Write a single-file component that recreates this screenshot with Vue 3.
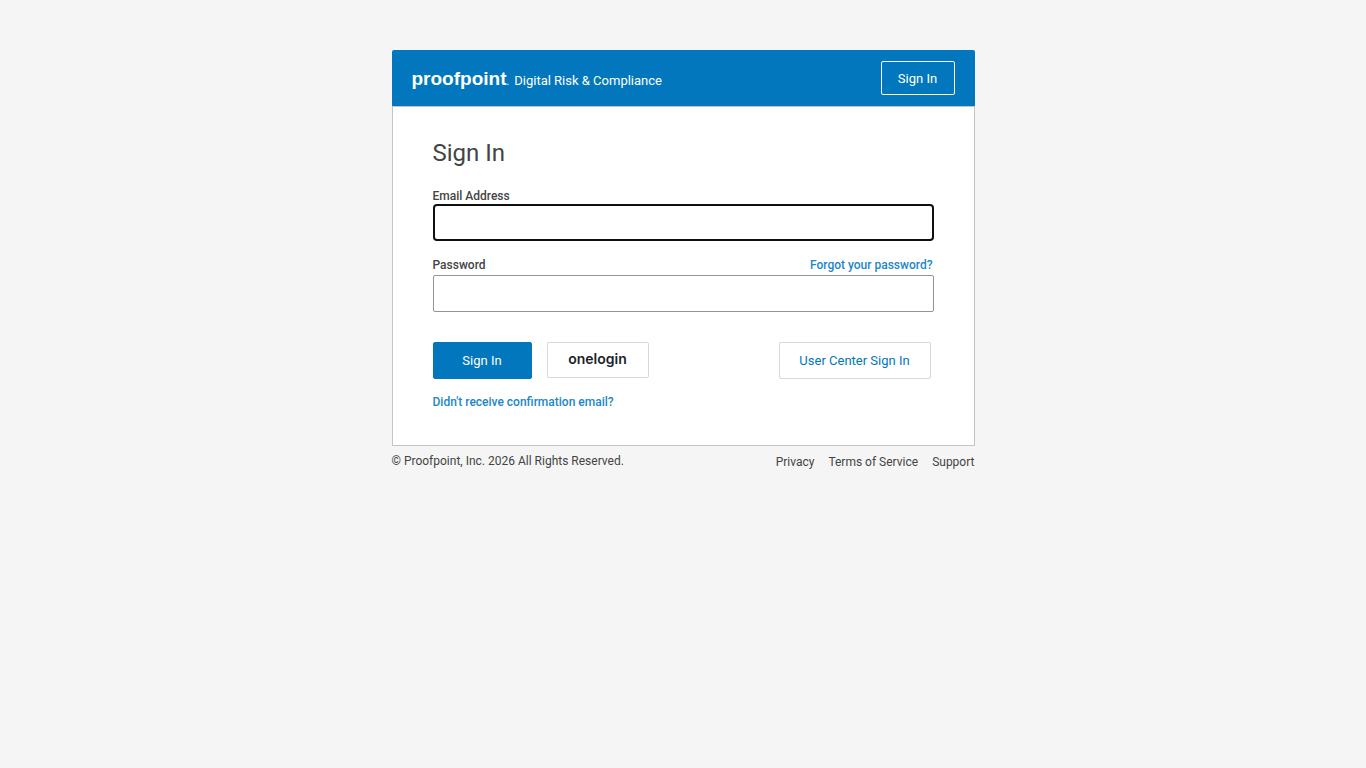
<script setup>
import { ref, onMounted } from 'vue'

const email = ref('')
const password = ref('')
const emailField = ref(null)
const links = ['Privacy', 'Terms of Service', 'Support']

onMounted(() => emailField.value.focus())
</script>

<template>
  <div class="page">
    <header class="header">
      <div class="brand">
        <span class="logo">proofpoint<span class="mark">.</span></span>
        <span class="product">Digital Risk &amp; Compliance</span>
      </div>
      <button type="button" class="btn header-btn">Sign In</button>
    </header>

    <main class="card">
      <h1>Sign In</h1>
      <form @submit.prevent>
        <div class="label-row">
          <label for="email">Email Address</label>
        </div>
        <input id="email" ref="emailField" v-model="email" type="email" class="field" />

        <div class="label-row second">
          <label for="password">Password</label>
          <a href="#" class="link">Forgot your password?</a>
        </div>
        <input id="password" v-model="password" type="password" class="field" />

        <div class="actions">
          <button type="submit" class="btn primary">Sign In</button>
          <button type="button" class="btn onelogin">onelogin</button>
          <button type="button" class="btn user-center">User Center Sign In</button>
        </div>
      </form>
      <a href="#" class="link">Didn't receive confirmation email?</a>
    </main>

    <footer class="footer">
      <span>© Proofpoint, Inc. 2026 All Rights Reserved.</span>
      <nav>
        <a v-for="item in links" :key="item" href="#">{{ item }}</a>
      </nav>
    </footer>
  </div>
</template>

<style>
body {
  background: #f5f5f5;
}
</style>

<style scoped>
.page {
  max-width: 583px;
  margin: 50px auto 0;
  font-family: Roboto, sans-serif;
  font-size: 12px;
  color: #444;
}
.page * {
  box-sizing: border-box;
}
.header {
  display: flex;
  justify-content: space-between;
  align-items: center;
  height: 56px;
  padding: 0 20px;
  background: #0277bd;
  border-radius: 2px 2px 0 0;
  color: #fff;
}
.brand {
  display: flex;
  align-items: baseline;
  gap: 5px;
  padding-top: 4px;
}
.logo {
  font: bold 19px/24px "Liberation Sans", Arial, sans-serif;
}
.mark {
  font-size: 10px;
  font-weight: normal;
}
.product {
  font-size: 13px;
}
.btn {
  font: 400 13px/16px Roboto, sans-serif;
  height: 37px;
  padding: 0;
  border: 1px solid #d8d8d8;
  border-radius: 2px;
  background: #fff;
  cursor: pointer;
}
.header-btn {
  width: 74px;
  height: 34px;
  padding-top: 2px;
  border-color: #fff;
  background: transparent;
  color: #fff;
}
.card {
  padding: 30px 40px 35px;
  background: #fff;
  border: 1px solid #c4c4c4;
}
h1 {
  margin: 0 0 19px;
  font-size: 24px;
  line-height: 32px;
  font-weight: 400;
}
.label-row {
  display: flex;
  justify-content: space-between;
  padding-right: 1px;
  line-height: 16px;
  font-weight: 500;
}
.label-row.second {
  margin-top: 16px;
  margin-bottom: 2px;
}
.field {
  display: block;
  width: 100%;
  height: 37px;
  padding: 0 10px;
  border: 1px solid #949494;
  border-radius: 2px;
  background: #fff;
  font: 13px Roboto, sans-serif;
  color: #444;
}
.field:focus {
  border: 2px solid #101010;
  border-radius: 4px;
  outline: none;
}
.actions {
  display: flex;
  align-items: flex-start;
  margin: 30px 3px 15px 0;
}
.primary {
  width: 99px;
  border-color: #0277bd;
  background: #0277bd;
  color: #fff;
}
.onelogin {
  width: 102px;
  height: 36px;
  margin-left: 15px;
  padding-bottom: 3px;
  font: 600 14px/18px Inter, sans-serif;
  color: #1c1f2a;
}
.user-center {
  width: 152px;
  margin-left: auto;
  color: #0277bd;
}
.link {
  font-weight: 500;
  line-height: 16px;
  color: #1b87c9;
  text-decoration: none;
}
.footer {
  display: flex;
  justify-content: space-between;
  align-items: flex-start;
  margin-top: 7px;
  line-height: 16px;
}
.footer nav {
  display: flex;
  gap: 14px;
  margin-top: 1px;
}
.footer a {
  color: #444;
  text-decoration: none;
}
</style>
